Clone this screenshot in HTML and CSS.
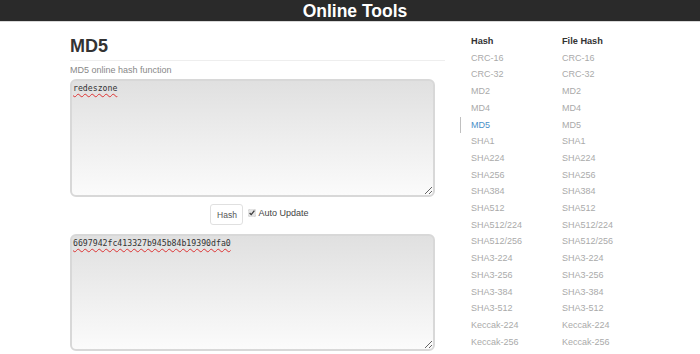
FILE: index.html
```html
<!DOCTYPE html>
<html>
<head>
<meta charset="utf-8">
<link rel="stylesheet" href="styles.css">
</head>
<body>
<header class="topbar">Online Tools</header>
<div class="page">
  <main class="main">
    <h1 class="title">MD5</h1>
    <p class="subtitle">MD5 online hash function</p>
    <textarea class="box box-in" spellcheck="false">redeszone</textarea>
    <div class="controls">
      <button class="btn">Hash</button>
      <label class="check"><input type="checkbox" checked> Auto Update</label>
    </div>
    <textarea class="box box-out" spellcheck="false">6697942fc413327b945b84b19390dfa0</textarea>
  </main>
  <nav class="side">
    <ul class="col">
      <li class="head">Hash</li>
      <li>CRC-16</li><li>CRC-32</li><li>MD2</li><li>MD4</li>
      <li class="active">MD5</li>
      <li>SHA1</li><li>SHA224</li><li>SHA256</li><li>SHA384</li><li>SHA512</li>
      <li>SHA512/224</li><li>SHA512/256</li><li>SHA3-224</li><li>SHA3-256</li>
      <li>SHA3-384</li><li>SHA3-512</li><li>Keccak-224</li><li>Keccak-256</li>
    </ul>
    <ul class="col">
      <li class="head">File Hash</li>
      <li>CRC-16</li><li>CRC-32</li><li>MD2</li><li>MD4</li>
      <li>MD5</li>
      <li>SHA1</li><li>SHA224</li><li>SHA256</li><li>SHA384</li><li>SHA512</li>
      <li>SHA512/224</li><li>SHA512/256</li><li>SHA3-224</li><li>SHA3-256</li>
      <li>SHA3-384</li><li>SHA3-512</li><li>Keccak-224</li><li>Keccak-256</li>
    </ul>
  </nav>
</div>
</body>
</html>
```
FILE: styles.css
```css
html, body {
  margin: 0;
  padding: 0;
  background: #fff;
  font-family: "Liberation Sans", Arial, sans-serif;
  overflow: hidden;
}
.topbar {
  height: 21px;
  background: #2a2a2a;
  color: #fff;
  font-weight: bold;
  font-size: 17.5px;
  line-height: 23px;
  text-align: center;
  border-bottom: 1px solid #d8d8d8;
  padding-left: 10px;
}
.page {
  display: flex;
  padding-left: 70px;
}
.main {
  width: 375px;
  display: flex;
  flex-direction: column;
}
.title {
  margin: 14px 0 0;
  font-size: 18px;
  line-height: 21px;
  font-weight: bold;
  color: #333;
  padding-bottom: 3px;
  border-bottom: 1px solid #eee;
}
.subtitle {
  margin: 3px 0 0;
  font-size: 9px;
  line-height: 12px;
  color: #888;
}
.box {
  box-sizing: border-box;
  width: 365px;
  margin: 3px 0 0;
  border: 2px solid #d8d8d8;
  border-radius: 6px;
  background: linear-gradient(#e0e0e0, #fbfbfb);
  font-family: "DejaVu Sans Mono", "Liberation Mono", monospace;
  font-size: 8.2px;
  line-height: 12px;
  color: #333;
  padding: 1px 1px;
  resize: vertical;
  outline: none;
  text-decoration: underline wavy #d33;
  text-decoration-thickness: 1px;
  text-underline-offset: 2px;
}
.box-in { height: 118px; }
.box-out { height: 117px; margin-top: 9px; }
.controls {
  display: flex;
  justify-content: center;
  align-items: center;
  gap: 5px;
  margin-top: 7px;
  padding-left: 4px;
}
.btn {
  box-sizing: border-box;
  height: 21px;
  width: 33px;
  padding: 0;
  border: 1px solid #e0e0e0;
  border-radius: 3px;
  background: #fff;
  font-family: "Liberation Sans", Arial, sans-serif;
  font-size: 8.5px;
  color: #555;
}
.check {
  display: flex;
  align-items: center;
  font-size: 9px;
  color: #444;
  margin-top: -3px;
}
.check input {
  width: 8px;
  height: 8px;
  margin: 0 2px 0 0;
  accent-color: #e4e4e4;
}
.side {
  display: flex;
  margin-left: 15px;
  margin-top: 11px;
}
.col {
  list-style: none;
  margin: 0;
  padding: 0;
  width: 91px;
}
.col li {
  font-size: 9px;
  line-height: 16.7px;
  color: #aaa;
  padding-left: 11px;
}
.col li.head {
  color: #333;
  font-weight: bold;
  font-size: 9.2px;
}
.col li.active {
  color: #4a8fc8;
  box-shadow: inset 1px 0 0 #c0c0c0;
}
```
